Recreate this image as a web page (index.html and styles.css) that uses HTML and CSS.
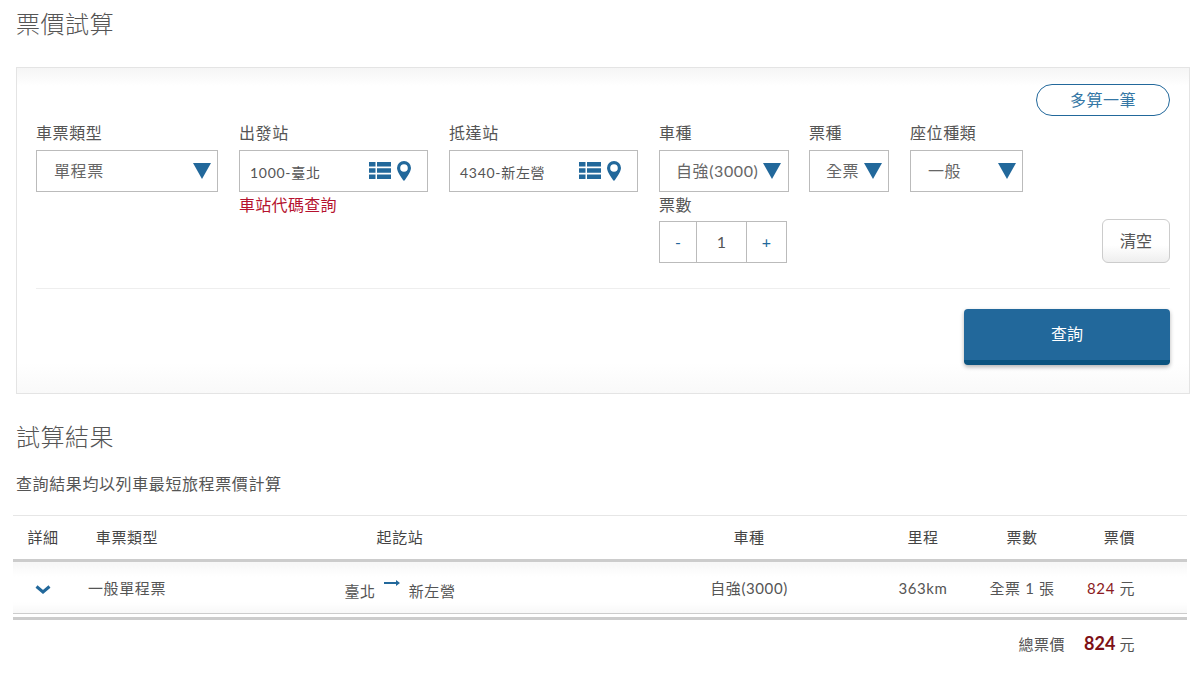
FILE: index.html
```html
<!DOCTYPE html>
<html lang="zh-Hant">
<head>
    <meta charset="UTF-8">
    <title>票價試算</title>
    <link rel="stylesheet" href="styles.css">
</head>
<body>
    <h1 class="page-title">票價試算</h1>

    <form class="panel">
        <div class="panel-top">
            <button type="button" class="add-btn">多算一筆</button>
        </div>
        <div class="field-row">
            <div class="field field-type">
                <div class="field-label">車票類型</div>
                <div class="select"><span>單程票</span><i class="caret"></i></div>
            </div>
            <div class="field field-station">
                <div class="field-label">出發站</div>
                <div class="station-box">
                    <span class="station-text">1000-臺北</span>
                    <svg class="icon-list" viewBox="0 0 22 17"><path d="M0 0h6.500v4.500H0zM8 0h14v4.500H8zM0 6.250h6.500v4.500H0zM8 6.250h14v4.500H8zM0 12.500h6.500V17H0zM8 12.500h14V17H8z"/></svg>
                    <svg class="icon-pin" viewBox="0 0 14 20"><path fill-rule="evenodd" d="M7 0a7 7 0 0 1 7 7c0 3.200-4.200 9.800-7 13C4.200 16.800 0 10.200 0 7a7 7 0 0 1 7-7zm0 3.200a3.800 3.800 0 1 0 0 7.600 3.800 3.800 0 0 0 0-7.600z"/></svg>
                </div>
                <a class="station-link" href="#">車站代碼查詢</a>
            </div>
            <div class="field field-station">
                <div class="field-label">抵達站</div>
                <div class="station-box">
                    <span class="station-text">4340-新左營</span>
                    <svg class="icon-list" viewBox="0 0 22 17"><path d="M0 0h6.500v4.500H0zM8 0h14v4.500H8zM0 6.250h6.500v4.500H0zM8 6.250h14v4.500H8zM0 12.500h6.500V17H0zM8 12.500h14V17H8z"/></svg>
                    <svg class="icon-pin" viewBox="0 0 14 20"><path fill-rule="evenodd" d="M7 0a7 7 0 0 1 7 7c0 3.200-4.200 9.800-7 13C4.200 16.800 0 10.200 0 7a7 7 0 0 1 7-7zm0 3.200a3.800 3.800 0 1 0 0 7.600 3.800 3.800 0 0 0 0-7.600z"/></svg>
                </div>
            </div>
            <div class="field field-train">
                <div class="field-label">車種</div>
                <div class="select select-tight"><span>自強(3000)</span><i class="caret"></i></div>
                <div class="field-label">票數</div>
                <div class="stepper">
                    <span class="step step-minus">-</span>
                    <span class="step-value">1</span>
                    <span class="step step-plus">+</span>
                </div>
            </div>
            <div class="field field-kind">
                <div class="field-label">票種</div>
                <div class="select select-tight"><span>全票</span><i class="caret"></i></div>
            </div>
            <div class="field field-seat">
                <div class="field-label">座位種類</div>
                <div class="select"><span>一般</span><i class="caret"></i></div>
            </div>
            <button type="button" class="clear-btn">清空</button>
        </div>
        <div class="panel-bottom">
            <button type="button" class="search-btn">查詢</button>
        </div>
    </form>

    <h2 class="page-title result-title">試算結果</h2>
    <p class="result-note">查詢結果均以列車最短旅程票價計算</p>

    <div class="result-wrap">
        <table class="result-table">
            <colgroup>
                <col class="col-detail">
                <col class="col-type">
                <col class="col-route">
                <col class="col-train">
                <col class="col-km">
                <col class="col-count">
                <col class="col-price">
            </colgroup>
            <thead>
                <tr>
                    <th>詳細</th>
                    <th>車票類型</th>
                    <th>起訖站</th>
                    <th>車種</th>
                    <th>里程</th>
                    <th>票數</th>
                    <th class="cell-price">票價</th>
                </tr>
            </thead>
            <tbody>
                <tr>
                    <td><svg class="icon-chevron" viewBox="0 0 16 9"><path d="M1.500 1.500 8 7l6.500-5.500"/></svg></td>
                    <td>一般單程票</td>
                    <td class="cell-route">臺北<svg class="icon-arrow" viewBox="0 0 16 6"><path d="M0 2h12V0l4 3-4 3V4H0z"/></svg>新左營</td>
                    <td>自強(3000)</td>
                    <td>363km</td>
                    <td>全票 1 張</td>
                    <td class="cell-price"><span class="price">824</span> 元</td>
                </tr>
            </tbody>
        </table>
    </div>

    <div class="total">
        <span class="total-label">總票價</span>
        <strong class="total-price">824</strong>
        <span>元</span>
    </div>
</body>
</html>
```

FILE: styles.css
```css
body {
    margin: 0;
    font-family: Lato, "Noto Sans CJK TC", sans-serif;
    font-size: 15px;
    color: #555;
    background-color: #fff;
    letter-spacing: 0.6px;
}
.page-title {
    margin: 6px 0 0 16px;
    font-size: 24px;
    line-height: 36px;
    font-weight: 300;
    letter-spacing: 0.5px;
    color: #555;
}
.panel {
    margin: 25px 0 0 16px;
    width: 1174px;
    box-sizing: border-box;
    padding: 16px 19px 28px;
    border: 1px solid #e4e4e4;
    background: linear-gradient(#f5f5f5, #fff 18px, #fff calc(100% - 30px), #f9f9f9);
}
.panel-top {
    display: flex;
    justify-content: flex-end;
    margin-bottom: 5px;
}
.add-btn {
    width: 134px;
    height: 32px;
    padding: 0 0 2px;
    border: 1px solid #22689b;
    border-radius: 16px;
    background-color: #fff;
    font: inherit;
    font-size: 16px;
    letter-spacing: 0.5px;
    color: #3577a5;
}
.field-row {
    display: flex;
    gap: 21px;
    padding-bottom: 25px;
    border-bottom: 1px solid #eee;
}
.field-label {
    height: 26px;
    line-height: 24px;
    margin-bottom: 3px;
    font-size: 16px;
    color: #555;
}
.select + .field-label {
    line-height: 26px;
}
.field-type { width: 182px; }
.field-station { width: 189px; }
.field-train { width: 130px; }
.field-kind { width: 80px; margin-left: -1px; }
.field-seat { width: 113px; }
.select,
.station-box {
    display: flex;
    align-items: center;
    box-sizing: border-box;
    height: 42px;
    border: 1px solid #bbb;
    background-color: #fff;
}
.select {
    justify-content: space-between;
    padding: 0 6px 0 17px;
    font-size: 16px;
    color: #666;
}
.select-tight {
    padding-left: 16px;
    padding-right: 7px;
}
.field-kind .select-tight {
    padding-right: 6px;
}
.caret {
    width: 0;
    height: 0;
    border-left: 9.500px solid transparent;
    border-right: 9.500px solid transparent;
    border-top: 16px solid #22689b;
}
.select > span {
    padding-bottom: 2px;
    white-space: nowrap;
}
.station-box {
    padding: 0 16px 0 10px;
}
.station-text {
    flex: 1;
    padding-top: 2px;
    font-size: 14px;
    letter-spacing: 0.7px;
}
.icon-list {
    width: 22px;
    height: 17px;
    margin-top: -2px;
    fill: #22689b;
}
.icon-pin {
    width: 14px;
    height: 20px;
    margin: -1px 0 0 6px;
    fill: #22689b;
}
.station-link {
    display: block;
    line-height: 26px;
    font-size: 16px;
    letter-spacing: 0.3px;
    color: #b5122e;
    text-decoration: none;
}
.stepper {
    display: flex;
    box-sizing: border-box;
    width: 128px;
    height: 42px;
    border: 1px solid #bbb;
    font-size: 16px;
    line-height: 40px;
    text-align: center;
    letter-spacing: 0;
}
.step {
    width: 36px;
    color: #22689b;
}
.step-value {
    width: 49px;
    border-left: 1px solid #bbb;
    border-right: 1px solid #bbb;
}
.step-plus {
    flex: 1;
}
.clear-btn {
    align-self: flex-end;
    margin-left: auto;
    width: 68px;
    height: 44px;
    padding: 0 0 2px;
    border: 1px solid #ccc;
    border-radius: 6px;
    background: linear-gradient(#fff, #fff 60%, #eee);
    font: inherit;
    font-size: 16px;
    letter-spacing: 0;
    color: #555;
}
.panel-bottom {
    display: flex;
    justify-content: flex-end;
    margin-top: 20px;
}
.search-btn {
    width: 206px;
    height: 56px;
    padding: 0 0 4px;
    border: none;
    border-bottom: 5px solid #0b5480;
    border-radius: 4px;
    background-color: #22689b;
    box-shadow: 0 2px 4px rgba(0, 0, 0, 0.3);
    font: inherit;
    font-size: 16px;
    letter-spacing: 0;
    color: #fff;
}
.result-title {
    margin-top: 25px;
}
.result-note {
    margin: 17px 0 0 16px;
    font-size: 16px;
    line-height: 24px;
    letter-spacing: 0.6px;
}
.result-wrap {
    margin: 19px 0 0 13px;
    width: 1174px;
    padding-bottom: 3px;
    border-bottom: 3px solid #ccc;
}
.result-table {
    width: 100%;
    table-layout: fixed;
    border-collapse: collapse;
    border-top: 1px solid #e6e6e6;
    text-align: center;
}
.col-detail { width: 60px; }
.col-type { width: 108px; }
.col-route { width: 438px; }
.col-train { width: 260px; }
.col-km { width: 88px; }
.col-count { width: 110px; }
.result-table th {
    height: 41px;
    padding: 0 0 2px;
    border-bottom: 3px solid #ccc;
    font-weight: 400;
    color: #444;
}
.result-table td {
    height: 51px;
    padding: 0;
    border-bottom: 1px solid #ccc;
    background: linear-gradient(#f6f6f6, #fff 14px, #fff 40px, #f7f7f7);
    color: #555;
}
.result-table .cell-price {
    padding-right: 52px;
    text-align: right;
}
.result-table .cell-route {
    padding-top: 6px;
    height: 45px;
}
.price {
    color: #8b1a22;
}
.icon-chevron {
    display: block;
    width: 16px;
    height: 9px;
    margin: 3px 0 0 22px;
    fill: none;
    stroke: #22689b;
    stroke-width: 3;
}
.icon-arrow {
    width: 16px;
    height: 6px;
    margin: 0 9px 11px 8px;
    fill: #22689b;
}
.total {
    display: flex;
    justify-content: flex-end;
    align-items: center;
    gap: 4px;
    width: 1135px;
    height: 46px;
    font-size: 15px;
}
.total-label {
    margin-right: 15px;
    letter-spacing: 0.5px;
}
.total-price {
    font-size: 18px;
    font-weight: 700;
    color: #7d1016;
    letter-spacing: 0;
}
```
